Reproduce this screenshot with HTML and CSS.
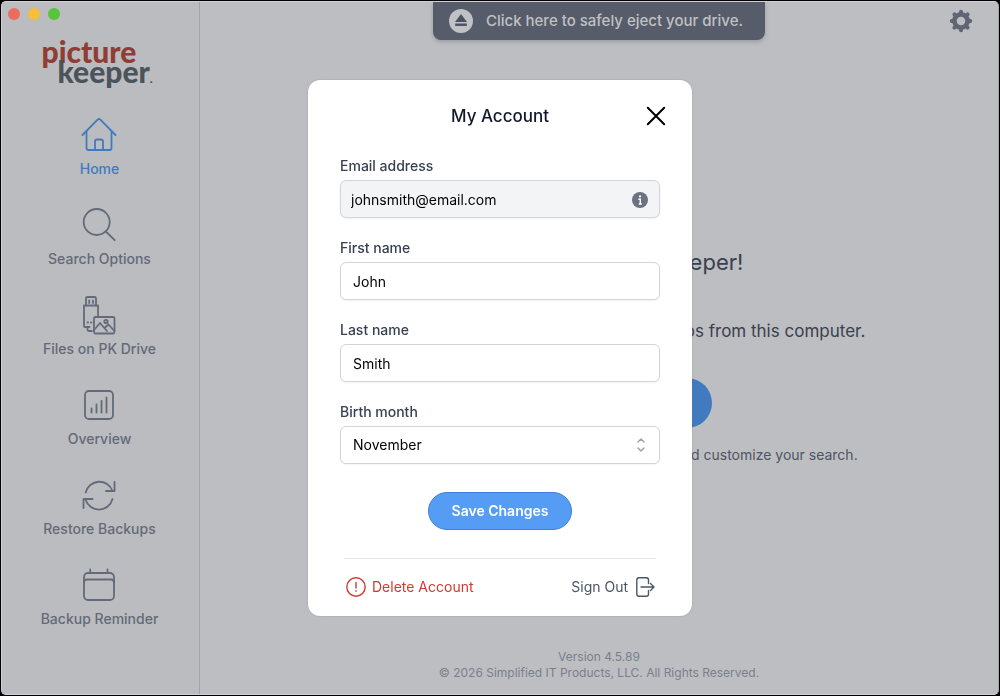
FILE: index.html
```html
<!DOCTYPE html>
<html lang="en">
<head>
    <meta charset="UTF-8">
    <meta name="viewport" content="width=device-width, initial-scale=1.0">
    <title>Picture Keeper - My Account</title>
    <link rel="stylesheet" href="styles.css">
</head>
<body>
    <div class="window">
        <div class="window-controls">
            <span class="dot dot-close"></span>
            <span class="dot dot-minimize"></span>
            <span class="dot dot-zoom"></span>
        </div>

        <aside class="sidebar">
            <div class="logo">
                <span class="logo-top">picture</span>
                <span class="logo-bottom">keeper<small>.</small></span>
            </div>
            <nav class="nav">
                <a href="#home" class="nav-item active">
                    <svg width="36" height="36" viewBox="0 0 36 36">
                        <path d="M1.5 18 L16.6 2.7 Q18 1.4 19.4 2.7 L34.5 18"/>
                        <path d="M5.5 14.5 V31 Q5.5 33 7.5 33 H28.5 Q30.5 33 30.5 31 V14.5"/>
                        <path d="M14 33 V24.5 Q14 22.5 16 22.5 H20 Q22 22.5 22 24.5 V33"/>
                    </svg>
                    <span>Home</span>
                </a>
                <a href="#search" class="nav-item">
                    <svg width="36" height="36" viewBox="0 0 36 36">
                        <circle cx="15.7" cy="15" r="13"/>
                        <path d="M24.8 24.5 L33.7 33.2"/>
                    </svg>
                    <span>Search Options</span>
                </a>
                <a href="#files" class="nav-item">
                    <svg class="icon-files" width="36" height="40" viewBox="0 0 36 40">
                        <path d="M5 10.5 V3.5 Q5 2 6.5 2 H13.5 Q15 2 15 3.5 V10.5"/>
                        <path d="M8.2 5.5 V8 M12 5.5 V8"/>
                        <path d="M17 20.5 V10.5 H3 V31 Q3 32 4 32 H8.5 M6.5 32 V34.5 Q6.5 36 8 36 H11"/>
                        <path d="M6.5 27.5 H7 M10 27.5 H10.5"/>
                        <rect x="13" y="22" width="20.5" height="16.5" rx="1.5"/>
                        <path d="M13.5 34.5 L19 28 L26 36 M23.5 33 L27.5 29.5 L33 35.5"/>
                        <circle cx="25" cy="26.5" r="1.7"/>
                    </svg>
                    <span>Files on PK Drive</span>
                </a>
                <a href="#overview" class="nav-item">
                    <svg width="36" height="36" viewBox="0 0 36 36">
                        <rect x="4" y="4" width="28" height="28" rx="4"/>
                        <path d="M10.5 21.5 V25.5 M15.5 17.5 V25.5 M20.5 14 V25.5 M25.5 10.5 V25.5"/>
                    </svg>
                    <span>Overview</span>
                </a>
                <a href="#restore" class="nav-item">
                    <svg width="36" height="36" viewBox="0 0 36 36">
                        <path d="M4.7 15.5 A14 14 0 0 1 31.5 14 M33.5 5 V14 H25"/>
                        <path d="M31.5 22 A14 14 0 0 1 4.5 22.5 M2.5 31 V22 H11.5"/>
                    </svg>
                    <span>Restore Backups</span>
                </a>
                <a href="#reminder" class="nav-item">
                    <svg width="36" height="36" viewBox="0 0 36 36">
                        <rect x="3" y="6" width="30" height="27" rx="4"/>
                        <path d="M3 15.5 Q3 12.5 6 12.5 H30 Q33 12.5 33 15.5 M9.2 2.5 V6 M26.5 2.5 V6"/>
                    </svg>
                    <span>Backup Reminder</span>
                </a>
            </nav>
        </aside>

        <main class="main">
            <button class="eject" type="button">
                <svg width="24" height="24" viewBox="0 0 24 24">
                    <circle cx="12" cy="12" r="12" fill="#c0c1c5"/>
                    <path d="M12 5 L18 13 H6 Z M6.2 14.6 H17.8 V17 H6.2 Z" fill="#4b5261"/>
                </svg>
                Click here to safely eject your drive.
            </button>
            <button class="settings" type="button" aria-label="Settings">
                <svg width="24" height="24" viewBox="0 0 24 24">
                    <circle cx="12" cy="12" r="6.6" fill="none" stroke="#5f6572" stroke-width="4.6"/>
                    <path d="M12 2.8 V4.5 M12 19.5 V21.2 M2.8 12 H4.5 M19.5 12 H21.2 M5.4 5.4 L6.5 6.5 M17.5 17.5 L18.6 18.6 M5.4 18.6 L6.5 17.5 M17.5 6.5 L18.6 5.4" stroke="#5f6572" stroke-width="4" stroke-linecap="round"/>
                </svg>
            </button>

            <section class="welcome">
                <h1>Welcome to Picture Keeper!</h1>
                <p class="lead">Click below to start backing up all your photos from this computer.</p>
                <button class="start" type="button">Start Backup</button>
                <p class="hint">Click on Search Options to choose other locations and customize your search.</p>
            </section>

            <footer class="footer">
                <p>Version 4.5.89</p>
                <p>© 2026 Simplified IT Products, LLC. All Rights Reserved.</p>
            </footer>
        </main>
    </div>

    <div class="overlay">
        <form class="dialog" role="dialog" aria-labelledby="dialog-title">
            <header class="dialog-header">
                <h2 id="dialog-title">My Account</h2>
                <button class="close" type="button" aria-label="Close">
                    <svg width="20" height="20" viewBox="0 0 20 20">
                        <path d="M1.8 1.8 L18.2 18.2 M18.2 1.8 L1.8 18.2"/>
                    </svg>
                </button>
            </header>

            <div class="field">
                <label for="email">Email address</label>
                <div class="control">
                    <input class="readonly" type="text" id="email" value="johnsmith@email.com" readonly>
                    <svg class="info" width="16" height="16" viewBox="0 0 16 16">
                        <circle cx="8" cy="8" r="8" fill="#6b7280"/>
                        <circle cx="8" cy="4.4" r="1.1" fill="#fff"/>
                        <path d="M6.4 7.2 H8.3 V11.8 M6.8 12 H9.8" fill="none" stroke="#fff" stroke-width="1.4"/>
                    </svg>
                </div>
            </div>
            <div class="field">
                <label for="first-name">First name</label>
                <input type="text" id="first-name" value="John">
            </div>
            <div class="field">
                <label for="last-name">Last name</label>
                <input type="text" id="last-name" value="Smith">
            </div>
            <div class="field">
                <label for="birth-month">Birth month</label>
                <div class="control">
                    <select id="birth-month">
                        <option>January</option>
                        <option>February</option>
                        <option>March</option>
                        <option>April</option>
                        <option>May</option>
                        <option>June</option>
                        <option>July</option>
                        <option>August</option>
                        <option>September</option>
                        <option>October</option>
                        <option selected>November</option>
                        <option>December</option>
                    </select>
                    <svg class="chevrons" width="20" height="20" viewBox="0 0 20 20">
                        <path d="M7 7 L10 4 L13 7 M7 13 L10 16 L13 13"/>
                    </svg>
                </div>
            </div>

            <button class="save" type="submit">Save Changes</button>

            <div class="dialog-footer">
                <button class="link delete" type="button">
                    <svg width="20" height="20" viewBox="0 0 20 20">
                        <circle cx="10" cy="10" r="9.2"/>
                        <path d="M10 5.5 V11 M10 13.8 V14.2"/>
                    </svg>
                    Delete Account
                </button>
                <button class="link" type="button">
                    Sign Out
                    <svg width="20" height="20" viewBox="0 0 20 20">
                        <path d="M12.5 6.5 V3 Q12.5 .8 10.3 .8 H3 Q.8 .8 .8 3 V17 Q.8 19.2 3 19.2 H10.3 Q12.5 19.2 12.5 17 V13.5"/>
                        <path d="M5 10 H18 M14.5 6.5 L18 10 L14.5 13.5"/>
                    </svg>
                </button>
            </div>
        </form>
    </div>
</body>
</html>
```
FILE: styles.css
```css
* {
    box-sizing: border-box;
}
body, html {
    margin: 0;
    height: 100%;
}
body {
    padding: 1px;
    background-color: #000000;
    font-family: Inter, "Liberation Sans", sans-serif;
    font-size: 14px;
    line-height: 20px;
    color: #374151;
}
h1, h2, p {
    margin: 0;
}
button, input, select {
    font: inherit;
    color: inherit;
}
button {
    padding: 0;
    border: none;
    background: none;
    cursor: pointer;
}
svg {
    flex: none;
}
.window {
    position: relative;
    display: flex;
    height: 100%;
    border: 1px solid #d0d1d4;
    border-right-color: #a5a6a9;
    border-radius: 5px;
    background-color: #bdbec2;
    overflow: hidden;
}
.window-controls {
    position: absolute;
    top: 6px;
    left: 6px;
    display: flex;
    gap: 8px;
}
.dot {
    width: 12px;
    height: 12px;
    border-radius: 50%;
}
.dot-close { background-color: #ed6a5e; }
.dot-minimize { background-color: #f5bf3a; }
.dot-zoom { background-color: #57c53a; }

/* Sidebar */
.sidebar {
    display: flex;
    flex-direction: column;
    align-items: center;
    flex: 0 0 198px;
    padding: 36px 2px 0 0;
    border-right: 1px solid #a2a4a9;
    background-color: #babcc0;
}
.logo {
    width: 116px;
    height: 52px;
    margin-bottom: 27px;
    font-family: Lato, sans-serif;
    font-size: 30px;
    font-weight: 900;
    line-height: 20px;
}
.logo span {
    display: block;
}
.logo-top {
    padding-top: 3px;
    color: #8f3d35;
}
.logo-bottom {
    padding-left: 16px;
    color: #4b535b;
}
.logo small {
    font-size: 12px;
}
.nav {
    display: flex;
    flex-direction: column;
    gap: 28px;
}
.nav-item {
    display: flex;
    flex-direction: column;
    align-items: center;
    gap: 6px;
    font-weight: 500;
    color: #646a78;
    text-decoration: none;
}
.nav-item svg {
    fill: none;
    stroke: currentColor;
    stroke-width: 1.8;
    stroke-linecap: round;
    stroke-linejoin: round;
}
.nav-item .icon-files {
    margin: -2px 0;
}
.nav-item.active {
    color: #427abf;
}

/* Main */
.main {
    position: relative;
    display: flex;
    flex-direction: column;
    align-items: center;
    flex: 1;
}
.eject {
    display: flex;
    align-items: center;
    gap: 13px;
    height: 38px;
    padding: 0 22px 0 16px;
    border-radius: 0 0 8px 8px;
    background-color: #565c6a;
    box-shadow: 0 2px 4px rgba(75, 82, 97, 0.3);
    font-size: 15px;
    font-weight: 500;
    color: #c0c1c5;
}
.settings {
    position: absolute;
    top: 7px;
    right: 25px;
    height: 24px;
}
.welcome {
    display: flex;
    flex-direction: column;
    align-items: center;
    padding-top: 206px;
    text-align: center;
    color: #3a4050;
}
.welcome h1 {
    font-size: 22px;
    font-weight: 400;
    line-height: 32px;
}
.lead {
    margin-top: 39px;
    font-size: 17px;
    line-height: 28px;
}
.start {
    width: 226px;
    height: 50px;
    margin-top: 33px;
    border-radius: 25px;
    background-color: #427abf;
    font-size: 17px;
    font-weight: 500;
    color: #c0c1c5;
}
.hint {
    margin-top: 17px;
    color: #4d5463;
}
.footer {
    margin-top: auto;
    padding-bottom: 13px;
    font-size: 12px;
    line-height: 16px;
    text-align: center;
    color: #7a7f8c;
}

/* Account dialog */
.overlay {
    position: fixed;
    inset: 0;
    display: flex;
    align-items: center;
    justify-content: center;
}
.dialog {
    width: 384px;
    padding: 22px 32px 19px;
    border-radius: 12px;
    background-color: #ffffff;
    box-shadow: 0 0 2px rgba(107, 114, 128, 0.4);
}
.dialog-header {
    position: relative;
    margin-bottom: 26px;
    text-align: center;
}
.dialog-header h2 {
    font-size: 17px;
    font-weight: 500;
    line-height: 28px;
    color: #111827;
}
.close {
    position: absolute;
    top: 4px;
    right: -6px;
    height: 20px;
}
.close svg {
    fill: none;
    stroke: #000000;
    stroke-width: 2;
    stroke-linecap: round;
}
.field {
    display: flex;
    flex-direction: column;
    gap: 4px;
    margin-bottom: 20px;
}
.field label {
    font-weight: 500;
}
.control {
    position: relative;
}
.field input, .field select {
    display: block;
    width: 100%;
    height: 38px;
    padding: 0 12px;
    border: 1px solid #d1d5db;
    border-radius: 6px;
    background-color: #ffffff;
    box-shadow: 0 1px 2px rgba(0, 0, 0, 0.05);
    color: #000000;
    appearance: none;
}
.field .readonly {
    padding: 0 10px;
    background-color: #f3f4f6;
}
.info {
    position: absolute;
    top: 12px;
    right: 12px;
}
.chevrons {
    position: absolute;
    top: 9px;
    right: 9px;
    fill: none;
    stroke: #9ca3af;
    stroke-width: 1.5;
    stroke-linecap: round;
    stroke-linejoin: round;
    pointer-events: none;
}
.save {
    display: block;
    height: 38px;
    margin: 28px auto;
    padding: 0 23px;
    border: 1px solid #427ed6;
    border-radius: 19px;
    background-color: #559df4;
    font-weight: 600;
    color: #ffffff;
}
.dialog-footer {
    display: flex;
    justify-content: space-between;
    margin: 0 4px;
    padding: 18px 0 0 2px;
    border-top: 1px solid #e5e7eb;
}
.link {
    display: flex;
    align-items: center;
    gap: 8px;
    color: #4b5563;
}
.link svg {
    fill: none;
    stroke: currentColor;
    stroke-width: 1.4;
    stroke-linecap: round;
    stroke-linejoin: round;
}
.link.delete {
    gap: 6px;
    color: #d03a2f;
}
```
